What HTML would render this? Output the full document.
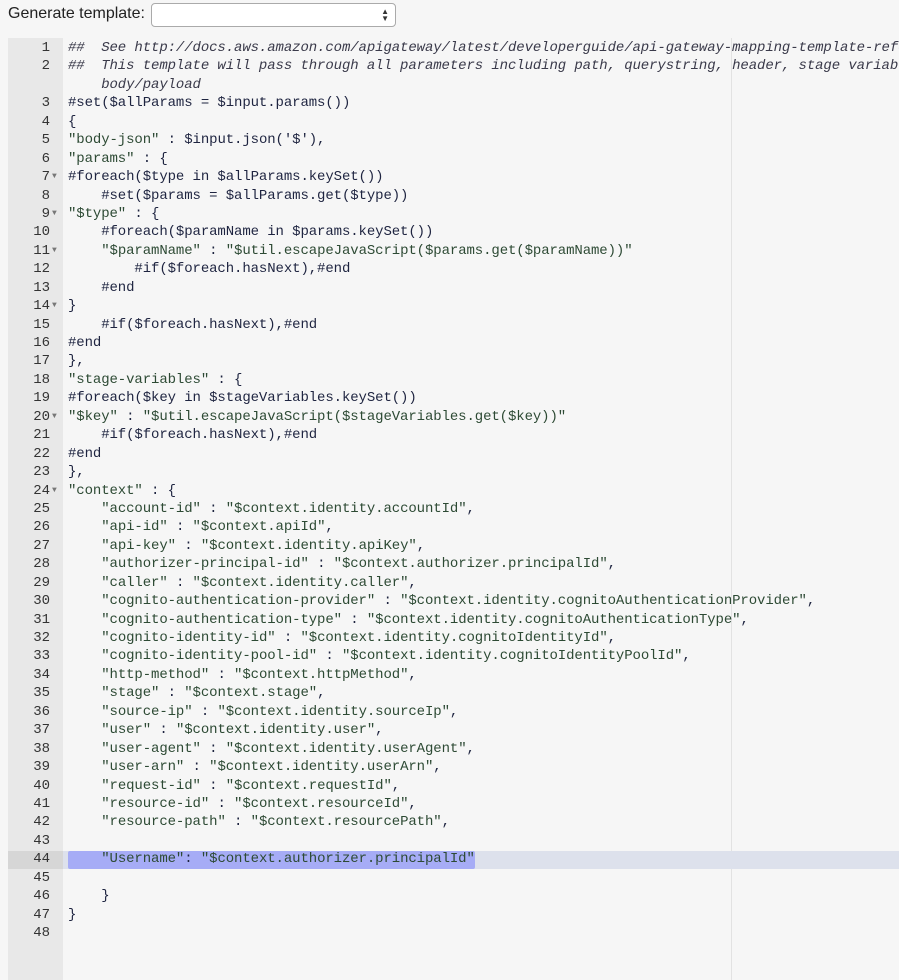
<!DOCTYPE html>
<html><head><meta charset="utf-8"><style>
html,body{margin:0;padding:0;background:#f6f6f6;width:899px;height:980px;overflow:hidden;position:relative}
.top{position:absolute;left:8px;top:5px;font:16px "Liberation Sans",sans-serif;color:#222}
.sel{position:absolute;left:151px;top:3px;width:243px;height:22px;border:1px solid #aaa;border-radius:4px;background:#fff}
.arr{position:absolute;right:6px;top:4px;font-size:8px;line-height:7px;color:#333}
.gut{position:absolute;left:8px;top:38px;width:55px;height:942px;background:#e8e8e8}
.margin{position:absolute;left:731px;top:38px;width:1px;height:942px;background:#e2e2e2}
.hl{position:absolute;left:63px;width:836px;height:18px;background:#dde1ec}
.hlg{position:absolute;left:8px;width:55px;height:18px;background:#d6d6d6}
.selb{position:absolute;left:68px;width:407px;height:18px;background:#a6acf6;border-radius:2px}
.code{position:absolute;left:0;top:39px;width:899px;height:941px;overflow:hidden;font:14px/18.45px "Liberation Mono",monospace;color:#1e2440}
.r{height:18.45px;position:relative;white-space:nowrap}
.n{position:absolute;left:8px;width:42px;text-align:right;color:#333}
.f{position:absolute;left:52px;font-size:8px;color:#777}
.t{position:absolute;left:68px;letter-spacing:-0.1px;white-space:pre}
.c{font-style:italic;color:#3a3a4a}
.s{color:#2d4a34}
</style></head><body>
<div class="top">Generate template:</div>
<div class="sel"><div class="arr">▲<br>▼</div></div>
<div class="gut"></div>
<div class="margin"></div>
<div class="hl" style="top:851px"></div>
<div class="hlg" style="top:851px"></div>
<div class="selb" style="top:851px"></div>
<div class="code"><div class="r"><span class="n">1</span><span class="t c">##  See http://docs.aws.amazon.com/apigateway/latest/developerguide/api-gateway-mapping-template-reference.html</span></div><div class="r"><span class="n">2</span><span class="t c">##  This template will pass through all parameters including path, querystring, header, stage variables, and context through to the integration endpoint via the</span></div><div class="r"><span class="t c">    body/payload</span></div><div class="r"><span class="n">3</span><span class="t">#set($allParams = $input.params())</span></div><div class="r"><span class="n">4</span><span class="t">{</span></div><div class="r"><span class="n">5</span><span class="t"><span class="s">"body-json"</span> : $input.json('$'),</span></div><div class="r"><span class="n">6</span><span class="t"><span class="s">"params"</span> : {</span></div><div class="r"><span class="n">7</span><span class="f">▼</span><span class="t">#foreach($type in $allParams.keySet())</span></div><div class="r"><span class="n">8</span><span class="t">    #set($params = $allParams.get($type))</span></div><div class="r"><span class="n">9</span><span class="f">▼</span><span class="t"><span class="s">"$type"</span> : {</span></div><div class="r"><span class="n">10</span><span class="t">    #foreach($paramName in $params.keySet())</span></div><div class="r"><span class="n">11</span><span class="f">▼</span><span class="t">    <span class="s">"$paramName"</span> : <span class="s">"$util.escapeJavaScript($params.get($paramName))"</span></span></div><div class="r"><span class="n">12</span><span class="t">        #if($foreach.hasNext),#end</span></div><div class="r"><span class="n">13</span><span class="t">    #end</span></div><div class="r"><span class="n">14</span><span class="f">▼</span><span class="t">}</span></div><div class="r"><span class="n">15</span><span class="t">    #if($foreach.hasNext),#end</span></div><div class="r"><span class="n">16</span><span class="t">#end</span></div><div class="r"><span class="n">17</span><span class="t">},</span></div><div class="r"><span class="n">18</span><span class="t"><span class="s">"stage-variables"</span> : {</span></div><div class="r"><span class="n">19</span><span class="t">#foreach($key in $stageVariables.keySet())</span></div><div class="r"><span class="n">20</span><span class="f">▼</span><span class="t"><span class="s">"$key"</span> : <span class="s">"$util.escapeJavaScript($stageVariables.get($key))"</span></span></div><div class="r"><span class="n">21</span><span class="t">    #if($foreach.hasNext),#end</span></div><div class="r"><span class="n">22</span><span class="t">#end</span></div><div class="r"><span class="n">23</span><span class="t">},</span></div><div class="r"><span class="n">24</span><span class="f">▼</span><span class="t"><span class="s">"context"</span> : {</span></div><div class="r"><span class="n">25</span><span class="t">    <span class="s">"account-id"</span> : <span class="s">"$context.identity.accountId"</span>,</span></div><div class="r"><span class="n">26</span><span class="t">    <span class="s">"api-id"</span> : <span class="s">"$context.apiId"</span>,</span></div><div class="r"><span class="n">27</span><span class="t">    <span class="s">"api-key"</span> : <span class="s">"$context.identity.apiKey"</span>,</span></div><div class="r"><span class="n">28</span><span class="t">    <span class="s">"authorizer-principal-id"</span> : <span class="s">"$context.authorizer.principalId"</span>,</span></div><div class="r"><span class="n">29</span><span class="t">    <span class="s">"caller"</span> : <span class="s">"$context.identity.caller"</span>,</span></div><div class="r"><span class="n">30</span><span class="t">    <span class="s">"cognito-authentication-provider"</span> : <span class="s">"$context.identity.cognitoAuthenticationProvider"</span>,</span></div><div class="r"><span class="n">31</span><span class="t">    <span class="s">"cognito-authentication-type"</span> : <span class="s">"$context.identity.cognitoAuthenticationType"</span>,</span></div><div class="r"><span class="n">32</span><span class="t">    <span class="s">"cognito-identity-id"</span> : <span class="s">"$context.identity.cognitoIdentityId"</span>,</span></div><div class="r"><span class="n">33</span><span class="t">    <span class="s">"cognito-identity-pool-id"</span> : <span class="s">"$context.identity.cognitoIdentityPoolId"</span>,</span></div><div class="r"><span class="n">34</span><span class="t">    <span class="s">"http-method"</span> : <span class="s">"$context.httpMethod"</span>,</span></div><div class="r"><span class="n">35</span><span class="t">    <span class="s">"stage"</span> : <span class="s">"$context.stage"</span>,</span></div><div class="r"><span class="n">36</span><span class="t">    <span class="s">"source-ip"</span> : <span class="s">"$context.identity.sourceIp"</span>,</span></div><div class="r"><span class="n">37</span><span class="t">    <span class="s">"user"</span> : <span class="s">"$context.identity.user"</span>,</span></div><div class="r"><span class="n">38</span><span class="t">    <span class="s">"user-agent"</span> : <span class="s">"$context.identity.userAgent"</span>,</span></div><div class="r"><span class="n">39</span><span class="t">    <span class="s">"user-arn"</span> : <span class="s">"$context.identity.userArn"</span>,</span></div><div class="r"><span class="n">40</span><span class="t">    <span class="s">"request-id"</span> : <span class="s">"$context.requestId"</span>,</span></div><div class="r"><span class="n">41</span><span class="t">    <span class="s">"resource-id"</span> : <span class="s">"$context.resourceId"</span>,</span></div><div class="r"><span class="n">42</span><span class="t">    <span class="s">"resource-path"</span> : <span class="s">"$context.resourcePath"</span>,</span></div><div class="r"><span class="n">43</span><span class="t"></span></div><div class="r"><span class="n">44</span><span class="t">    <span class="s">"Username"</span>: <span class="s">"$context.authorizer.principalId"</span></span></div><div class="r"><span class="n">45</span><span class="t"></span></div><div class="r"><span class="n">46</span><span class="t">    }</span></div><div class="r"><span class="n">47</span><span class="t">}</span></div><div class="r"><span class="n">48</span><span class="t"></span></div></div>
</body></html>
